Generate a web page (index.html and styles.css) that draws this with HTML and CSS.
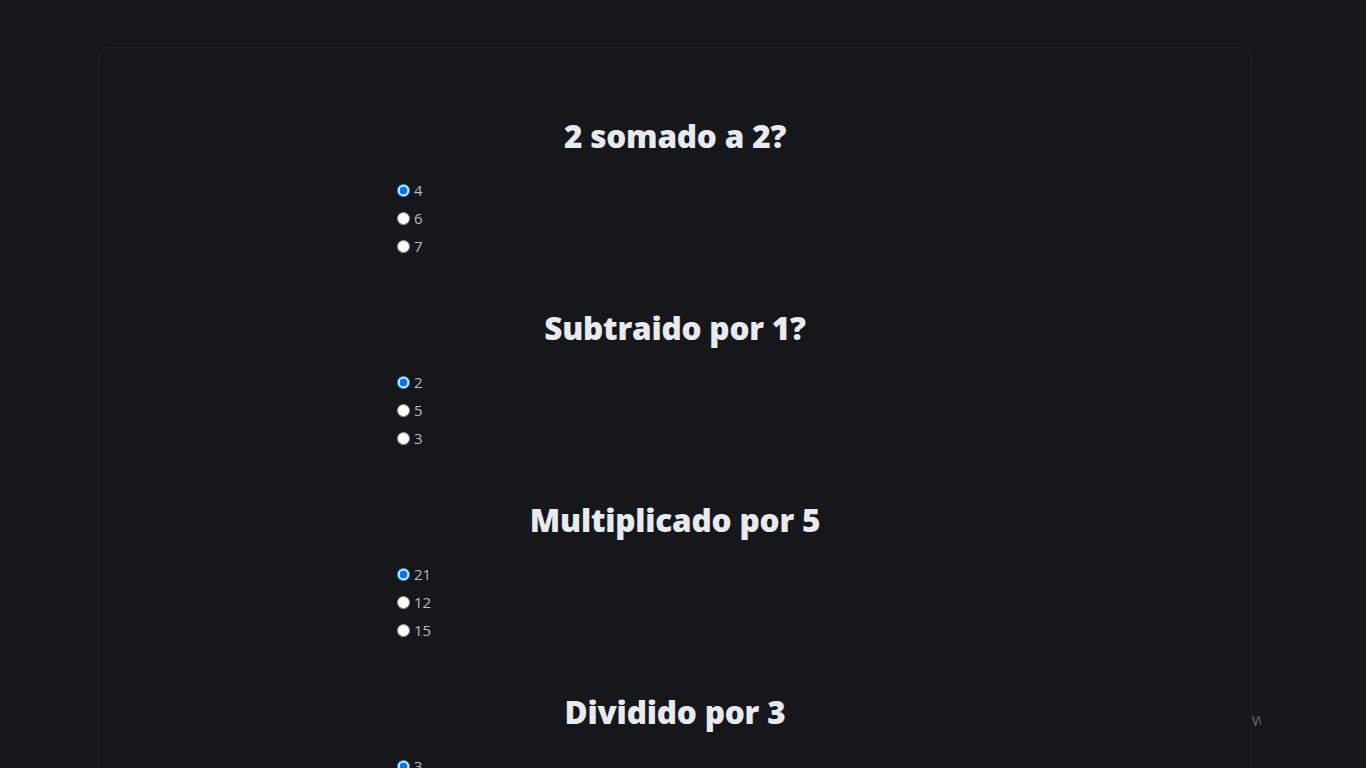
FILE: index.html
```html
<!DOCTYPE html>
<html lang="pt">
<head>
<meta charset="utf-8">
<title>Quiz</title>
<link rel="stylesheet" href="styles.css">
</head>
<body>
<main class="card">
  <form class="quiz">
    <section class="question">
      <h2>2 somado a 2?</h2>
      <ul class="options">
        <li><label><input type="radio" name="q1" checked>4</label></li>
        <li><label><input type="radio" name="q1">6</label></li>
        <li><label><input type="radio" name="q1">7</label></li>
      </ul>
    </section>
    <section class="question">
      <h2>Subtraido por 1?</h2>
      <ul class="options">
        <li><label><input type="radio" name="q2" checked>2</label></li>
        <li><label><input type="radio" name="q2">5</label></li>
        <li><label><input type="radio" name="q2">3</label></li>
      </ul>
    </section>
    <section class="question">
      <h2>Multiplicado por 5</h2>
      <ul class="options">
        <li><label><input type="radio" name="q3" checked>21</label></li>
        <li><label><input type="radio" name="q3">12</label></li>
        <li><label><input type="radio" name="q3">15</label></li>
      </ul>
    </section>
    <section class="question">
      <h2>Dividido por 3</h2>
      <ul class="options">
        <li><label><input type="radio" name="q4" checked>3</label></li>
        <li><label><input type="radio" name="q4">5</label></li>
        <li><label><input type="radio" name="q4">9</label></li>
      </ul>
    </section>
  </form>
  <span class="edge-mark">W</span>
</main>
</body>
</html>
```

FILE: styles.css
```css
html, body {
  margin: 0;
  padding: 0;
  background: #16171b;
  height: 100%;
  overflow: hidden;
}

body {
  font-family: "Open Sans", "Noto Sans", sans-serif;
  color: #e8eaf0;
  padding-top: 47px;
}

.card {
  position: relative;
  margin-left: 98px;
  width: 1154px;
  min-height: 900px;
  box-sizing: border-box;
  background: #16171b;
  border: 1px solid #1f2025;
  border-radius: 12px;
  box-shadow: 0 10px 10px rgba(255, 255, 255, 0.02);
  padding-top: 68px;
}

.quiz {
  width: 566px;
  margin: 0 auto;
  display: flex;
  flex-direction: column;
  gap: 48px;
}

.question h2 {
  margin: 0 0 20px;
  font-family: "Open Sans", sans-serif;
  font-weight: 800;
  font-size: 31.5px;
  line-height: 40px;
  text-align: center;
  color: #e8eaf0;
  letter-spacing: -0.2px;
}

.options {
  list-style: none;
  margin: 0;
  padding: 0;
}

.options li {
  height: 28px;
  display: flex;
  align-items: center;
}

.options label {
  font-size: 15px;
  color: #b6bac3;
  display: flex;
  align-items: center;
}

.options input {
  margin: 0 4px 0 5px;
  width: 13px;
  height: 13px;
}

.edge-mark {
  position: absolute;
  right: -10px;
  top: 663px;
  width: 9px;
  overflow: hidden;
  font-size: 14px;
  color: #6a6d74;
  font-family: "Open Sans", sans-serif;
}
```
